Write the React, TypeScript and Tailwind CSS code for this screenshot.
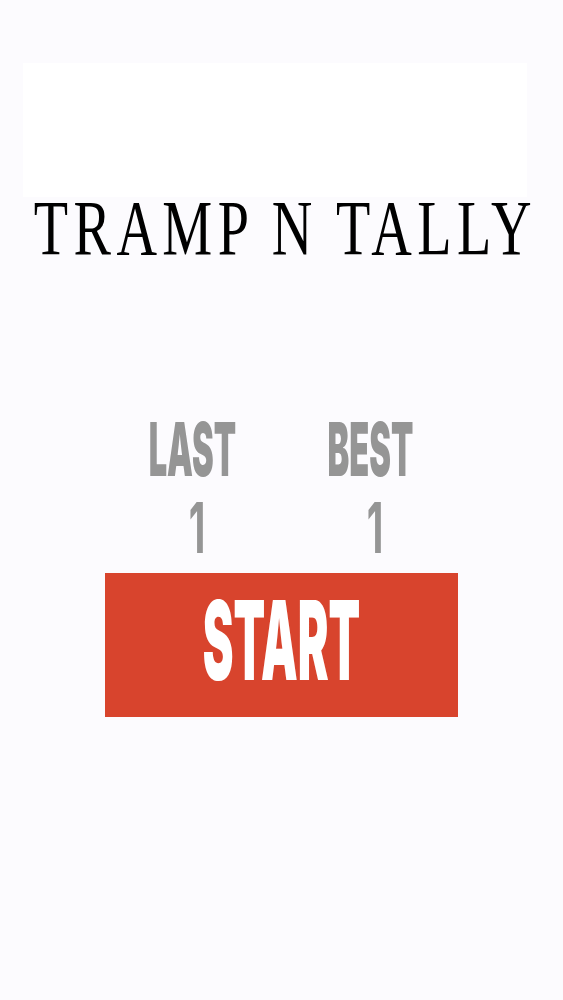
import React from "react";

const condensed = { fontFamily: "Inter, 'Liberation Sans', sans-serif" };

function Stat({ label, value }: { label: string; value: number }) {
  return (
    <div className="flex flex-col items-center">
      <span
        style={condensed}
        className="inline-block origin-center scale-x-[0.44] text-[74px] font-black leading-none text-[#959595]"
      >
        {label}
      </span>
      <span
        style={condensed}
        className="mt-[12px] inline-block origin-center translate-x-[5px] scale-x-[0.55] text-[70px] font-bold leading-[60px] text-[#959595]"
      >
        {value}
      </span>
    </div>
  );
}

export default function App() {
  const last = 1;
  const best = 1;

  return (
    <div className="flex min-h-screen w-full flex-col items-center bg-[#fcfbfe]">
      {/* banner slot */}
      <div className="ml-[23px] mt-[63px] h-[134px] w-[504px] self-start bg-white" />

      <h1
        className="mt-[-8px] flex w-full justify-center whitespace-nowrap pl-[7px] text-[78px] font-normal leading-none text-black"
        style={{ fontFamily: "'Liberation Serif', serif" }}
      >
        <span className="inline-block origin-center scale-x-[0.72] tracking-[7.5px]">TRAMP N TALLY</span>
      </h1>

      <div className="mt-[145px] grid w-[356px] grid-cols-2">
        <Stat label="LAST" value={last} />
        <Stat label="BEST" value={best} />
      </div>

      <button className="mt-[15px] flex h-[144px] w-[353px] items-center justify-center overflow-hidden bg-[#d8442d] pb-[10px]">
        <span
          style={condensed}
          className="inline-block origin-center scale-x-[0.42] text-[110px] font-black leading-none text-white"
        >
          START
        </span>
      </button>
    </div>
  );
}
